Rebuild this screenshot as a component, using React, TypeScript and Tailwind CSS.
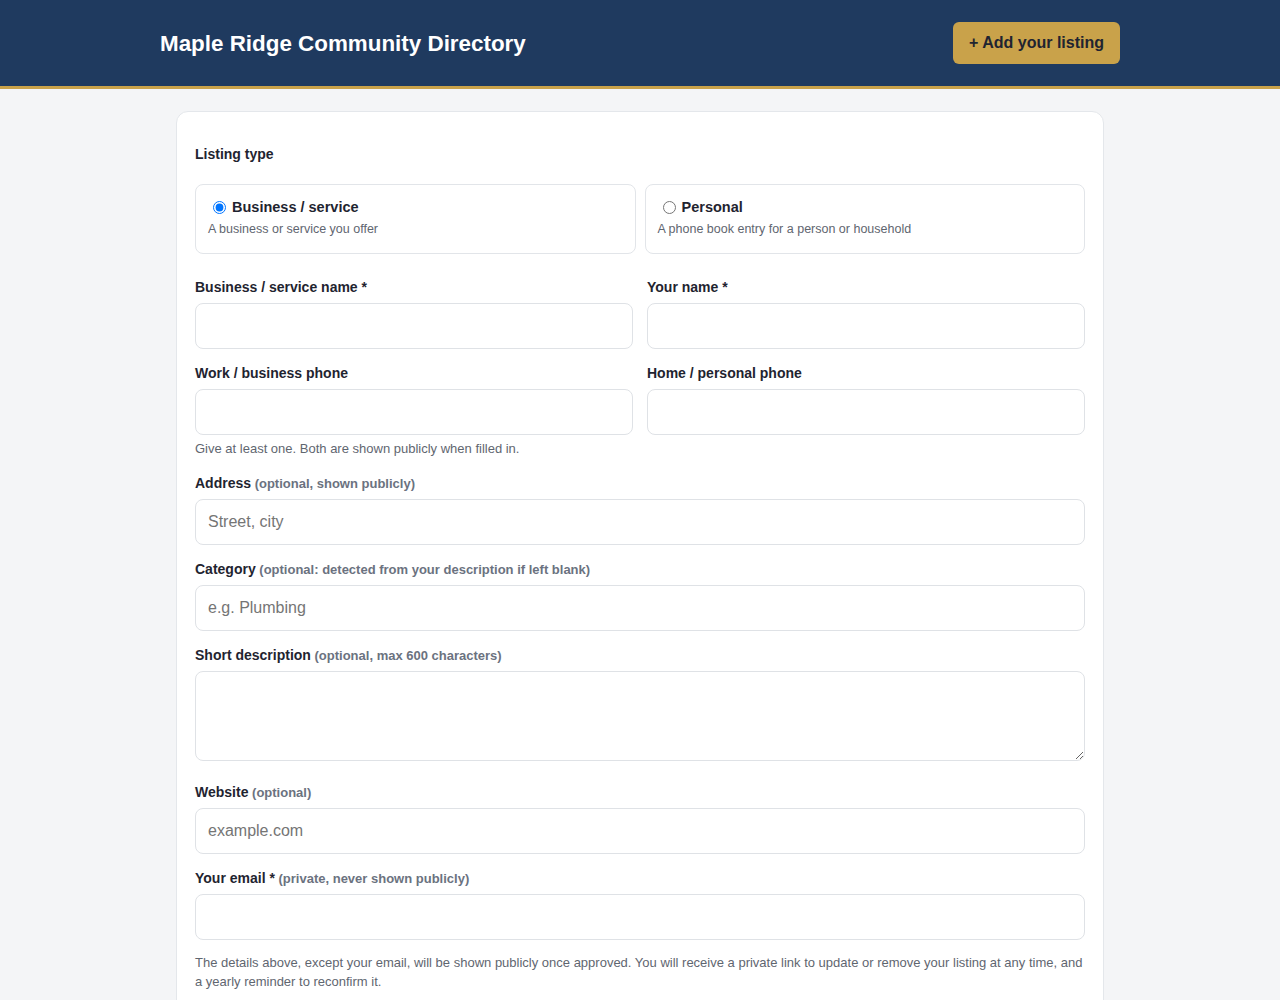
import { useState } from 'react';

const font = { fontFamily: '"Liberation Sans", Arial, sans-serif' };

function Label({ text, hint }: { text: string; hint?: string }) {
  return (
    <label className="block text-[14px] leading-[21px] font-bold text-[#1f2430] mb-[5px]">
      {text}
      {hint && <span className="text-[13px] font-bold text-[#6b7280]"> {hint}</span>}
    </label>
  );
}

function TextInput({ placeholder }: { placeholder?: string }) {
  return (
    <input
      type="text"
      placeholder={placeholder}
      className="block w-full h-[46px] px-3 rounded-lg border border-[#dfe2e6] bg-white text-[16px] text-[#1f2430] placeholder:text-[#757575] outline-none"
    />
  );
}

function RadioCard({
  checked,
  title,
  desc,
  onPick,
}: {
  checked: boolean;
  title: string;
  desc: string;
  onPick: () => void;
}) {
  return (
    <label className="flex-1 block rounded-lg border border-[#e2e5e9] bg-white px-3 pt-3 pb-[14px] cursor-pointer">
      <div className="flex items-center">
        <input
          type="radio"
          name="kind"
          checked={checked}
          onChange={onPick}
          className="ml-[5px] mr-[6px] w-[13px] h-[13px]"
        />
        <span className="text-[14.5px] leading-[21px] font-bold text-[#1f2430]">{title}</span>
      </div>
      <div className="text-[12.5px] leading-[19px] text-[#5f6670] mt-[2px]">{desc}</div>
    </label>
  );
}

export default function App() {
  const [kind, setKind] = useState<'business' | 'personal'>('business');

  return (
    <div className="min-h-screen bg-[#f4f5f7]" style={font}>
      <header className="bg-[#1f3a5f] border-b-[3px] border-[#c9a24a]">
        <div className="w-[960px] mx-auto h-[86px] flex items-center justify-between">
          <h1 className="text-white text-[22.4px] font-bold pt-[2px]">Maple Ridge Community Directory</h1>
          <button className="h-[42px] px-4 rounded-md bg-[#c9a24a] text-[#1f2430] text-[16px] font-bold">
            + Add your listing
          </button>
        </div>
      </header>

      <main className="pt-[22px] pb-10">
        <div className="w-[928px] mx-auto bg-white border border-[#e4e7eb] rounded-xl px-[18px] pt-8 pb-6">
          <div className="text-[14px] leading-[21px] font-bold text-[#1f2430] mb-[19px]">Listing type</div>
          <div className="flex gap-[9px] mb-[23px]">
            <RadioCard
              checked={kind === 'business'}
              title="Business / service"
              desc="A business or service you offer"
              onPick={() => setKind('business')}
            />
            <RadioCard
              checked={kind === 'personal'}
              title="Personal"
              desc="A phone book entry for a person or household"
              onPick={() => setKind('personal')}
            />
          </div>

          <div className="grid grid-cols-2 gap-x-[14px] mb-[14px]">
            <div>
              <Label text="Business / service name *" />
              <TextInput />
            </div>
            <div>
              <Label text="Your name *" />
              <TextInput />
            </div>
          </div>

          <div className="grid grid-cols-2 gap-x-[14px]">
            <div>
              <Label text="Work / business phone" />
              <TextInput />
            </div>
            <div>
              <Label text="Home / personal phone" />
              <TextInput />
            </div>
          </div>
          <p className="text-[13px] leading-[19px] text-[#5f6670] mt-[4px] mb-[15px]">
            Give at least one. Both are shown publicly when filled in.
          </p>

          <div className="mb-[14px]">
            <Label text="Address" hint="(optional, shown publicly)" />
            <TextInput placeholder="Street, city" />
          </div>

          <div className="mb-[14px]">
            <Label text="Category" hint="(optional: detected from your description if left blank)" />
            <TextInput placeholder="e.g. Plumbing" />
          </div>

          <div className="mb-[21px]">
            <Label text="Short description" hint="(optional, max 600 characters)" />
            <textarea className="block w-full h-[90px] px-3 py-2 rounded-lg border border-[#dfe2e6] bg-white text-[16px] outline-none" />
          </div>

          <div className="mb-[14px]">
            <Label text="Website" hint="(optional)" />
            <TextInput placeholder="example.com" />
          </div>

          <div className="mb-[13px]">
            <Label text="Your email *" hint="(private, never shown publicly)" />
            <TextInput />
          </div>

          <p className="text-[13px] leading-[19px] text-[#5f6670]">
            The details above, except your email, will be shown publicly once approved. You will receive a private
            link to update or remove your listing at any time, and a yearly reminder to reconfirm it.
          </p>
        </div>
      </main>
    </div>
  );
}
